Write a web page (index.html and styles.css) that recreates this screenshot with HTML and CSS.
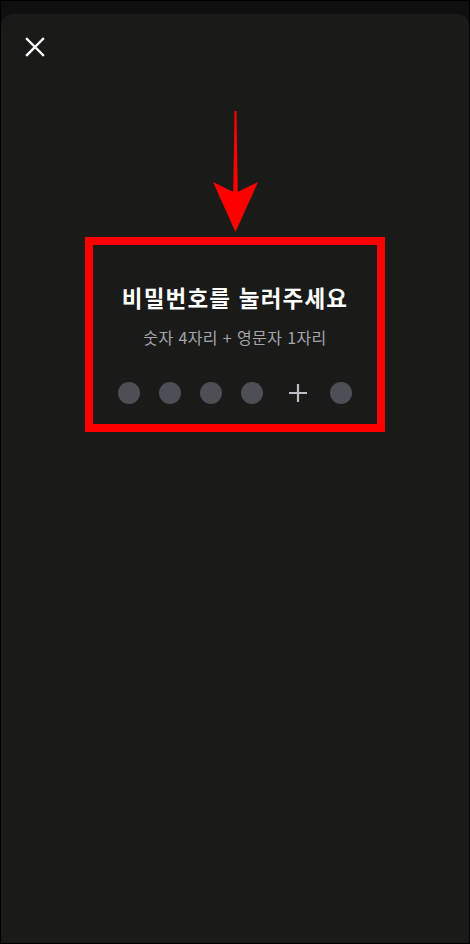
FILE: index.html
```html
<!DOCTYPE html>
<html lang="ko">
<head>
<meta charset="utf-8">
<link rel="stylesheet" href="styles.css">
</head>
<body>
<div class="frame">
  <div class="sheet">
    <button class="close" aria-label="닫기">
      <svg width="20" height="20" viewBox="0 0 20 20"><path d="M2 2 L18 18 M18 2 L2 18" stroke="#ffffff" stroke-width="2.4" stroke-linecap="square" fill="none"/></svg>
    </button>
    <div class="stage">
      <svg class="arrow" width="50" height="124" viewBox="0 0 50 124">
        <polygon points="24.5,0 26.5,0 27.8,84 23.2,84" fill="#ff0000"/>
        <polygon points="3,71 25.5,82 48,71 25.5,121" fill="#ff0000"/>
      </svg>
      <div class="panel">
        <h1 class="title">비밀번호를 눌러주세요</h1>
        <p class="sub">숫자 4자리 + 영문자 1자리</p>
        <div class="dots">
          <span class="dot"></span>
          <span class="dot"></span>
          <span class="dot"></span>
          <span class="dot"></span>
          <span class="plus"><svg width="20" height="20" viewBox="0 0 20 20"><path d="M10 1 V19 M1 10 H19" stroke="#b9bdc4" stroke-width="2.2" fill="none"/></svg></span>
          <span class="dot"></span>
        </div>
      </div>
    </div>
  </div>
</div>
</body>
</html>
```
FILE: styles.css
```css
html, body {
  margin: 0;
  padding: 0;
  background: #000;
}
.frame {
  width: 470px;
  height: 944px;
  box-sizing: border-box;
  border: 1px solid #000;
  background: #0e0f0e;
  padding-top: 13px;
  display: flex;
  flex-direction: column;
  font-family: "Noto Sans CJK KR", "Noto Sans", sans-serif;
}
.sheet {
  flex: 1;
  background: #1a1b19;
  border-radius: 12px 12px 0 0;
  display: flex;
  flex-direction: column;
}
.close {
  background: none;
  border: 0;
  padding: 0;
  margin: 23px 0 0 24px;
  width: 20px;
  height: 20px;
  display: flex;
}
.stage {
  position: relative;
  margin-top: 180px;
  display: flex;
  justify-content: center;
}
.arrow {
  position: absolute;
  left: 209px;
  top: -126px;
}
.panel {
  width: 300px;
  height: 195px;
  box-sizing: border-box;
  border: 8px solid #ff0000;
  display: flex;
  flex-direction: column;
  align-items: center;
  padding-top: 37px;
}
.title {
  margin: 0;
  color: #ffffff;
  font-size: 22.5px;
  font-weight: 700;
  line-height: 30px;
  letter-spacing: 1.2px;
}
.sub {
  margin: 14px 0 0;
  color: #a3a6ab;
  font-size: 16px;
  line-height: 22px;
  letter-spacing: 0.4px;
}
.dots {
  margin-top: 34px;
  display: flex;
  align-items: center;
}
.dot {
  width: 22px;
  height: 22px;
  border-radius: 50%;
  background: #4e4e56;
  margin: 0 9.5px;
}
.plus {
  display: flex;
  margin: 0 13px 0 15px;
}
```
